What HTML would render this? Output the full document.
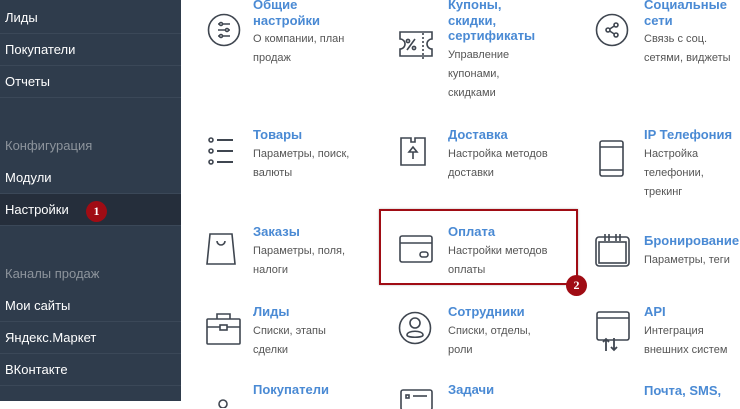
<!DOCTYPE html>
<html><head><meta charset="utf-8"><style>
*{margin:0;padding:0;box-sizing:border-box}
body{width:740px;height:401px;overflow:hidden;background:#fff;font-family:"Liberation Sans","DejaVu Sans",sans-serif;position:relative}
#sb{position:absolute;left:0;top:0;width:181px;height:401px;background:#2f3c4c}
.it{position:absolute;left:0;width:181px;height:32px;line-height:32px;padding-left:5px;color:#fff;font-size:13px;border-bottom:1px solid #3b4858}
.hd{position:absolute;left:5px;color:#8d949c;font-size:13px}
.act{background:#252e3b}
.badge{position:absolute;width:21px;height:21px;border-radius:50%;background:#a00c14;color:#fff;font-weight:bold;font-size:12px;text-align:center;line-height:21px;font-family:"Liberation Serif",serif}
.c{position:absolute;width:110px}
.t{color:#4a8ad4;font-weight:bold;font-size:13px;line-height:15.5px}
.d{color:#555;font-size:11px;line-height:19px;margin-top:2px}
svg{position:absolute;fill:none;stroke:#3f4650;stroke-width:1.6}
</style></head><body>
<div id="sb">
<div class="it" style="top:2px">Лиды</div>
<div class="it" style="top:34px">Покупатели</div>
<div class="it" style="top:66px">Отчеты</div>
<div class="hd" style="top:138px">Конфигурация</div>
<div class="it" style="top:162px">Модули</div>
<div class="it act" style="top:194px">Настройки</div>
<div class="hd" style="top:266px">Каналы продаж</div>
<div class="it" style="top:290px">Мои сайты</div>
<div class="it" style="top:322px">Яндекс.Маркет</div>
<div class="it" style="top:354px">ВКонтакте</div>
</div>
<div class="badge" style="left:86px;top:201px">1</div>

<svg style="left:206px;top:13px" width="36" height="36"><circle cx="18" cy="17" r="15.5"/><path d="M12 11h12M12 17h12M12 23h12"/><circle cx="15" cy="11" r="1.5" fill="#fff"/><circle cx="21" cy="17" r="1.5" fill="#fff"/><circle cx="15" cy="23" r="1.5" fill="#fff"/></svg>
<div class="c" style="left:253px;top:-3px"><div class="t">Общие<br>настройки</div><div class="d">О компании, план<br>продаж</div></div>

<svg style="left:398px;top:28px" width="36" height="36"><path d="M2 4h32v7a5 5 0 0 0 0 10v7H2v-7a5 5 0 0 0 0-10z"/><path d="M25 5v26" stroke-dasharray="2 2"/><path d="M9 22l8-11"/><circle cx="10" cy="13" r="1.6"/><circle cx="16" cy="20" r="1.6"/></svg>
<div class="c" style="left:448px;top:-3px"><div class="t">Купоны,<br>скидки,<br>сертификаты</div><div class="d">Управление<br>купонами,<br>скидками</div></div>

<svg style="left:595px;top:13px" width="36" height="36"><circle cx="17" cy="17" r="15.5"/><circle cx="13" cy="17" r="2"/><circle cx="21" cy="12" r="2"/><circle cx="21" cy="22" r="2"/><path d="M14.7 16l4.6-3M14.7 18l4.6 3"/></svg>
<div class="c" style="left:644px;top:-3px;width:100px"><div class="t">Социальные<br>сети</div><div class="d">Связь с соц.<br>сетями, виджеты</div></div>

<svg style="left:206px;top:134px" width="36" height="34"><circle cx="5" cy="6" r="2"/><circle cx="5" cy="17" r="2"/><circle cx="5" cy="28" r="2"/><path d="M11 6h16M11 17h16M11 28h16" stroke-width="2"/></svg>
<div class="c" style="left:253px;top:127px"><div class="t">Товары</div><div class="d">Параметры, поиск,<br>валюты</div></div>

<svg style="left:398px;top:134px" width="36" height="34"><path d="M3 4h10v4h4V4h10v27H3z"/><path d="M15 25v-7h-4l4-5 4 5h-4"/></svg>
<div class="c" style="left:448px;top:127px"><div class="t">Доставка</div><div class="d">Настройка методов<br>доставки</div></div>

<svg style="left:598px;top:138px" width="30" height="40"><rect x="2" y="3" width="23" height="35" rx="2"/><path d="M2 9h23M2 32h23"/></svg>
<div class="c" style="left:644px;top:127px;width:100px"><div class="t">IP Телефония</div><div class="d">Настройка<br>телефонии,<br>трекинг</div></div>

<svg style="left:203px;top:231px" width="40" height="36"><path d="M7 3h22l3 30H4z"/><path d="M14 10a4 4 0 0 0 8 0"/></svg>
<div class="c" style="left:253px;top:224px"><div class="t">Заказы</div><div class="d">Параметры, поля,<br>налоги</div></div>

<svg style="left:398px;top:234px" width="36" height="30"><rect x="2" y="2" width="32" height="26" rx="2"/><path d="M2 9h32"/><rect x="22" y="18" width="8" height="5" rx="2.5"/></svg>
<div class="c" style="left:448px;top:224px"><div class="t">Оплата</div><div class="d">Настройки методов<br>оплаты</div></div>
<div style="position:absolute;left:379px;top:209px;width:199px;height:76px;border:2px solid #a00c14;box-shadow:0 0 2px rgba(0,0,0,.3)"></div>
<div class="badge" style="left:566px;top:275px">2</div>

<svg style="left:594px;top:232px" width="38" height="36"><rect x="2" y="5" width="33" height="29" rx="3"/><rect x="5" y="10" width="27" height="21"/><path d="M11 2v7M15 2v7M22 2v7M26 2v7"/></svg>
<div class="c" style="left:644px;top:233px;width:110px"><div class="t">Бронирование</div><div class="d">Параметры, теги</div></div>

<svg style="left:206px;top:311px" width="36" height="36"><rect x="1" y="8" width="33" height="25" rx="1"/><path d="M11 8V3h13v5M1 16h13M21 16h13"/><rect x="14" y="14" width="7" height="5"/></svg>
<div class="c" style="left:253px;top:304px"><div class="t">Лиды</div><div class="d">Списки, этапы<br>сделки</div></div>

<svg style="left:398px;top:311px" width="36" height="36"><circle cx="17" cy="17" r="15.5"/><circle cx="17" cy="12" r="5"/><path d="M9 24c0-5 16-5 16 0 0 3-16 3-16 0z"/></svg>
<div class="c" style="left:448px;top:304px"><div class="t">Сотрудники</div><div class="d">Списки, отделы,<br>роли</div></div>

<svg style="left:596px;top:311px" width="36" height="42"><rect x="1" y="1" width="32" height="28" rx="2"/><path d="M1 7h32"/><path d="M10 40V28M7 31l3-3 3 3M18 27v12M15 36l3 3 3-3" stroke-width="1.8"/></svg>
<div class="c" style="left:644px;top:304px;width:110px"><div class="t">API</div><div class="d">Интеграция<br>внешних систем</div></div>

<div class="c" style="left:253px;top:382px"><div class="t">Покупатели</div></div>
<svg style="left:206px;top:398px" width="36" height="10"><circle cx="17" cy="6" r="4"/></svg>
<svg style="left:400px;top:389px" width="36" height="20"><rect x="1" y="1" width="31" height="20" rx="2"/><rect x="6" y="6" width="3" height="3"/><path d="M13 7h14"/></svg>
<div class="c" style="left:448px;top:382px"><div class="t">Задачи</div></div>
<div class="c" style="left:644px;top:383px;width:110px"><div class="t">Почта, SMS,</div></div>
</body></html>
